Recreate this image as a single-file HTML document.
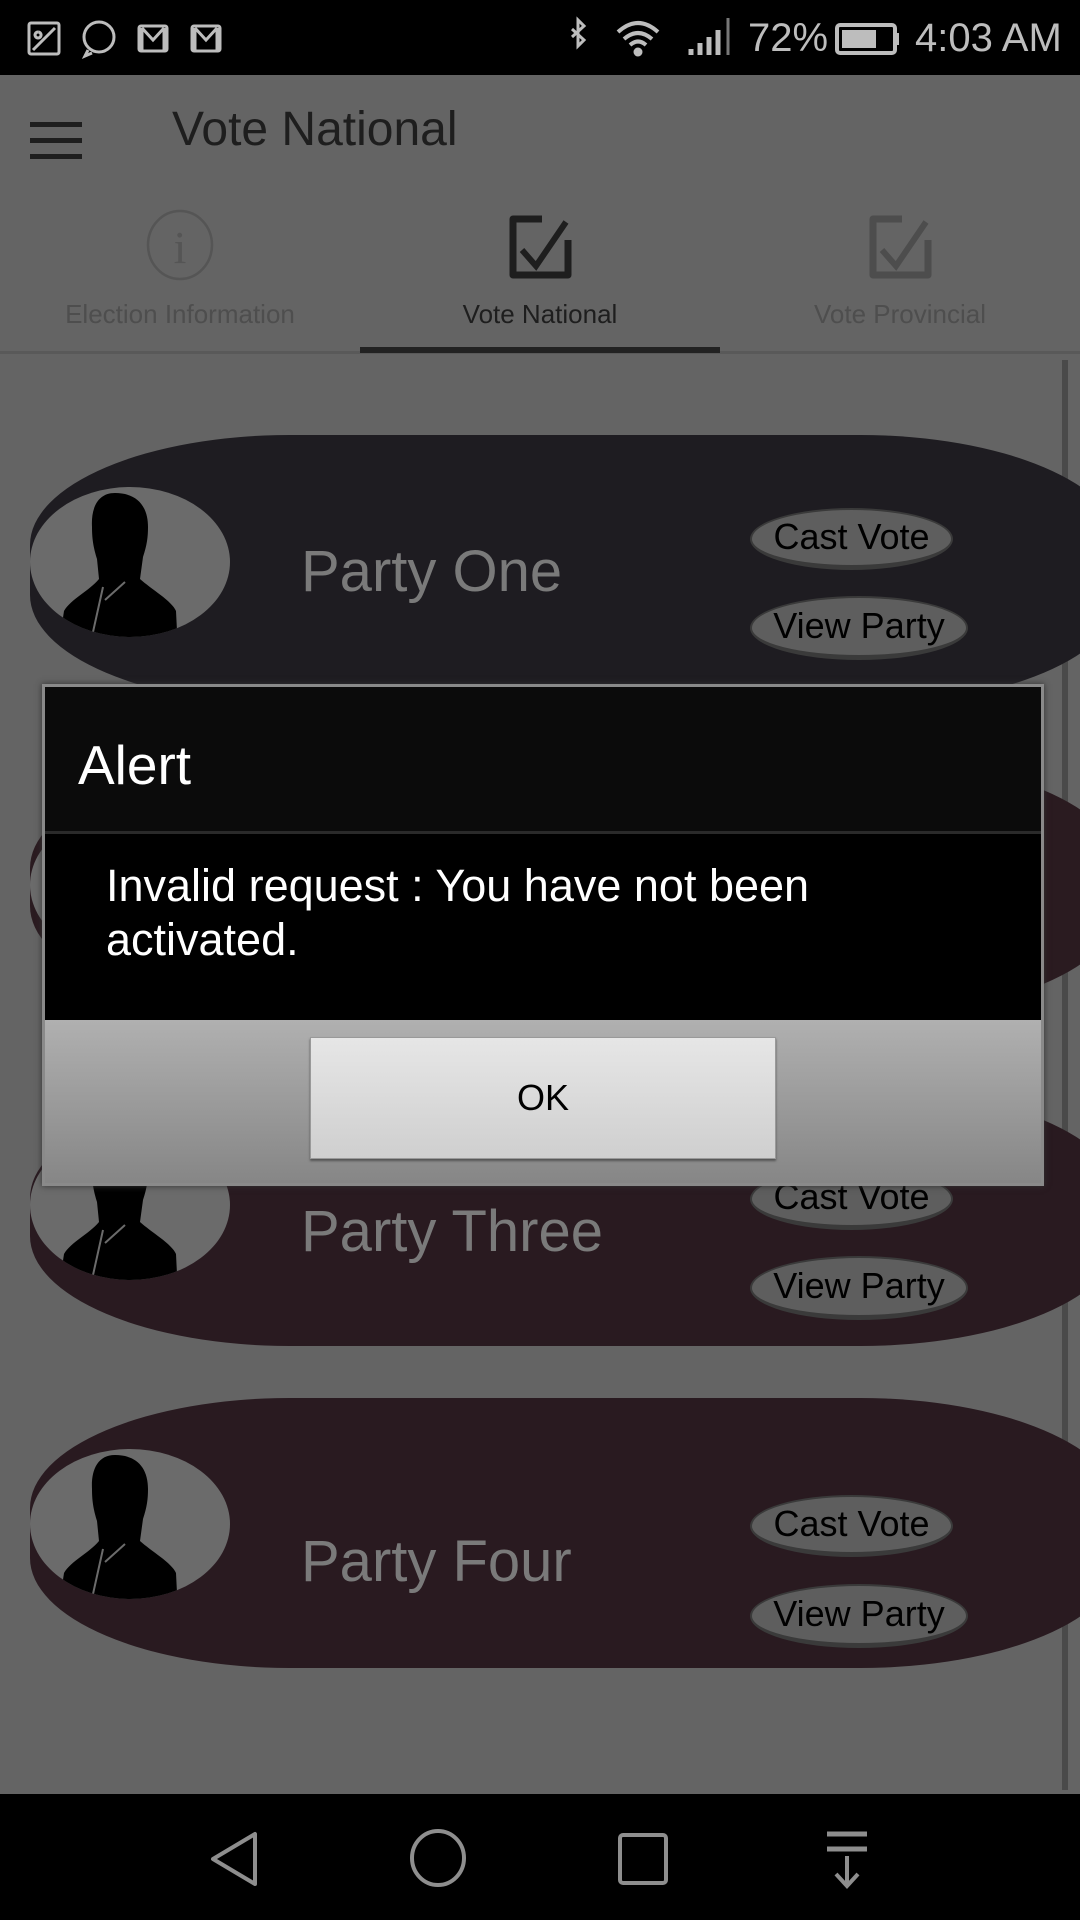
<!DOCTYPE html>
<html><head><meta charset="utf-8"><style>
*{margin:0;padding:0;box-sizing:border-box}
body{width:1080px;height:1920px;background:#646464;font-family:"Liberation Sans",sans-serif;position:relative;overflow:hidden}
.abs{position:absolute}
.card{position:absolute;left:30px;width:1090px;border-radius:260px/110px}
.av{position:absolute;left:30px;width:200px;height:150px;border-radius:50%;background:#6b6b6b;overflow:hidden}
.name{position:absolute;left:301px;font-size:58px;color:#7a7a7a}
.pill{position:absolute;background:#5e5e5e;border-radius:50%;border:2px solid #3a3a3a;border-bottom-width:5px;color:#000;font-size:36px;text-align:center}
</style></head><body>
<!-- status bar -->
<div class="abs" style="left:0;top:0;width:1080px;height:75px;background:#000"></div>
<svg class="abs" style="left:0;top:0" width="1080" height="75" fill="none" stroke="#bdbdbd" stroke-width="3">
<rect x="29" y="23" width="30" height="31" rx="2"/><path d="M33 50 L55 28 M38 32 a3 3 0 1 0 .1 0"/>
<circle cx="99" cy="37" r="15"/><path d="M88 50 l-3 6 7-3"/>
<rect x="139" y="26" width="28" height="25" rx="2"/><path d="M142 28 v22 M164 28 v22 M142 28 l11 12 11-12"/>
<rect x="192" y="26" width="28" height="25" rx="2"/><path d="M195 28 v22 M217 28 v22 M195 28 l11 12 11-12"/>
<path d="M572 29 l12 11 -6 6 v-26 l6 6 -12 11"/>
<path d="M618 32 q20-18 40 0 M624 39 q14-12 28 0 M630 45 q8-7 16 0" stroke-width="4"/><circle cx="638" cy="52" r="3" fill="#bdbdbd"/>
<path d="M691 55v-6 M700 55v-12 M709 55v-18 M718 55v-25" stroke-width="5"/><path d="M728 55v-37" stroke="#777" stroke-width="3"/>
<rect x="837" y="25" width="58" height="28" rx="3" stroke-width="4"/><rect x="842" y="30" width="34" height="18" fill="#bdbdbd" stroke="none"/><rect x="895" y="33" width="4" height="12" fill="#bdbdbd" stroke="none"/>
</svg>
<div class="abs" style="left:748px;top:16px;font-size:40px;color:#bdbdbd">72%</div>
<div class="abs" style="left:915px;top:16px;font-size:40px;color:#bdbdbd">4:03 AM</div>
<!-- app bar -->
<div class="abs" style="left:30px;top:122px;width:52px;height:5px;background:#1e1e1e"></div>
<div class="abs" style="left:30px;top:138px;width:52px;height:5px;background:#1e1e1e"></div>
<div class="abs" style="left:30px;top:154px;width:52px;height:5px;background:#1e1e1e"></div>
<div class="abs" style="left:172px;top:102px;font-size:48px;color:#1e1e1e">Vote National</div>
<svg class="abs" style="left:0;top:0" width="1080" height="350" fill="none">
<ellipse cx="180" cy="245" rx="32" ry="34" stroke="#555" stroke-width="2.5"/>
<text x="180" y="263" font-family="Liberation Serif" font-size="46" fill="#555" text-anchor="middle">i</text>
<path d="M542 219 h-29 v56 h55 v-35" stroke="#1e1e1e" stroke-width="7" stroke-linejoin="round"/><path d="M522 250 l14 16 30-44" stroke="#1e1e1e" stroke-width="6"/>
<path d="M902 219 h-29 v56 h55 v-35" stroke="#4d4d4d" stroke-width="7" stroke-linejoin="round"/><path d="M882 250 l14 16 30-44" stroke="#4d4d4d" stroke-width="6"/>
</svg>
<div class="abs" style="left:0;top:299px;width:360px;text-align:center;font-size:26px;color:#4e4e4e">Election Information</div>
<div class="abs" style="left:360px;top:299px;width:360px;text-align:center;font-size:26px;color:#1e1e1e">Vote National</div>
<div class="abs" style="left:720px;top:299px;width:360px;text-align:center;font-size:26px;color:#4e4e4e">Vote Provincial</div>
<div class="abs" style="left:0;top:351px;width:1080px;height:3px;background:#595959"></div>
<div class="abs" style="left:360px;top:347px;width:360px;height:6px;background:#222"></div>
<div class="abs" style="left:1062px;top:360px;width:6px;height:1430px;background:#4a4a4a"></div>

<!-- cards -->
<div class="card" style="top:435px;height:270px;background:#1e1c21"></div>
<div class="card" style="top:758px;height:258px;background:#2a1b20"></div>
<div class="card" style="top:1088px;height:258px;background:#291a20"></div>
<div class="card" style="top:1398px;height:270px;background:#291a20"></div>

<svg width="0" height="0" style="position:absolute"><defs><g id="man"><path d="M85 6 c-18 0-24 16-23 34 c0 14 2 22 5 32 l2 20 c-10 12-28 20-35 32 l-6 40 h120 l-2-40 c-4-10-25-22-36-32 l3-22 c4-12 5-20 5-30 c0-22-12-34-33-34z" fill="#000"/><path d="M73 100 l-10 45 M95 95 l-20 18" stroke="#6b6b6b" stroke-width="2"/></g></defs></svg>
<div class="av" style="top:487px"><svg width="200" height="150"><use href="#man"/></svg></div>
<div class="av" style="top:810px"><svg width="200" height="150"><use href="#man"/></svg></div>
<div class="av" style="top:1130px"><svg width="200" height="150"><use href="#man"/></svg></div>
<div class="av" style="top:1449px"><svg width="200" height="150"><use href="#man"/></svg></div>

<div class="name" style="top:538px">Party One</div>
<div class="name" style="top:868px">Party Two</div>
<div class="name" style="top:1198px">Party Three</div>
<div class="name" style="top:1528px">Party Four</div>

<div class="pill" style="left:750px;top:508px;width:203px;height:62px;line-height:54px">Cast Vote</div>
<div class="pill" style="left:750px;top:596px;width:218px;height:64px;line-height:56px">View Party</div>
<div class="pill" style="left:750px;top:838px;width:203px;height:62px;line-height:54px">Cast Vote</div>
<div class="pill" style="left:750px;top:926px;width:218px;height:64px;line-height:56px">View Party</div>
<div class="pill" style="left:750px;top:1168px;width:203px;height:62px;line-height:54px">Cast Vote</div>
<div class="pill" style="left:750px;top:1256px;width:218px;height:64px;line-height:56px">View Party</div>
<div class="pill" style="left:750px;top:1495px;width:203px;height:62px;line-height:54px">Cast Vote</div>
<div class="pill" style="left:750px;top:1584px;width:218px;height:64px;line-height:56px">View Party</div>

<!-- dialog -->
<div class="abs" style="left:42px;top:684px;width:1002px;height:502px;border:3px solid #8a8a8a;box-shadow:0 0 6px #333;background:#000">
 <div class="abs" style="left:0;top:0;width:996px;height:144px;background:#0b0b0b"></div>
 <div class="abs" style="left:0;top:144px;width:996px;height:3px;background:#2a2a2a"></div>
 <div class="abs" style="left:33px;top:46px;font-size:55px;color:#fff">Alert</div>
 <div class="abs" style="left:61px;top:172px;font-size:45px;line-height:54px;color:#fff;width:760px">Invalid request : You have not been activated.</div>
 <div class="abs" style="left:0;top:333px;width:996px;height:163px;background:linear-gradient(#b0b0b0,#868686)"></div>
 <div class="abs" style="left:265px;top:350px;width:466px;height:122px;background:linear-gradient(#e6e6e6,#cfcfcf);border:1px solid #999;box-shadow:0 2px 2px #555;text-align:center;line-height:120px;font-size:36px;color:#000">OK</div>
</div>

<!-- nav bar -->
<div class="abs" style="left:0;top:1794px;width:1080px;height:126px;background:#000"></div>
<svg class="abs" style="left:0;top:1794px" width="1080" height="126" fill="none" stroke="#8e8e8e" stroke-width="4">
<path d="M255 40 v50 l-42-25z" stroke-linejoin="round"/>
<ellipse cx="438" cy="64" rx="26" ry="27"/>
<rect x="620" y="41" width="46" height="48" rx="3"/>
<path d="M827 40 h40 M827 55 h40" stroke-width="5"/><path d="M847 62 v30 M836 80 l11 12 11-12"/>
</svg>
</body></html>
